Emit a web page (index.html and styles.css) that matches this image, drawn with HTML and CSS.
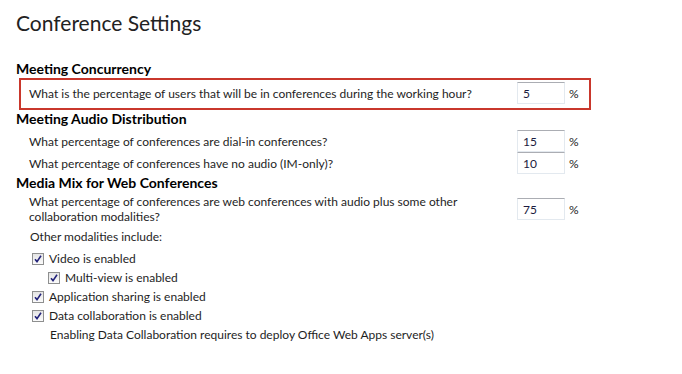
FILE: index.html
```html
<!DOCTYPE html>
<html lang="en">
<head>
    <meta charset="UTF-8">
    <title>Conference Settings</title>
    <link rel="stylesheet" href="styles.css">
</head>
<body>
    <div id="page">
        <h1>Conference Settings</h1>

        <h2>Meeting Concurrency</h2>
        <div class="highlight">
            <div class="row">
                <span class="question">What is the percentage of users that will be in conferences during the working hour?</span>
                <input type="text" value="5">
                <span class="unit">%</span>
            </div>
        </div>

        <h2>Meeting Audio Distribution</h2>
        <div class="rows">
            <div class="row">
                <span class="question">What percentage of conferences are dial-in conferences?</span>
                <input type="text" value="15">
                <span class="unit">%</span>
            </div>
            <div class="row">
                <span class="question">What percentage of conferences have no audio (IM-only)?</span>
                <input type="text" value="10">
                <span class="unit">%</span>
            </div>
        </div>

        <h2>Media Mix for Web Conferences</h2>
        <div class="rows">
            <div class="row tall">
                <span class="question">What percentage of conferences are web conferences with audio plus some other collaboration modalities?</span>
                <input type="text" value="75">
                <span class="unit">%</span>
            </div>
        </div>

        <p class="note">Other modalities include:</p>
        <div class="checks">
            <label class="check"><span class="box"><svg width="8" height="8" viewBox="0 0 8 8"><path d="M1 4.2 L3 6.6 L7 0.8" fill="none" stroke="#23237a" stroke-width="1.6"/></svg></span>Video is enabled</label>
            <label class="check sub"><span class="box"><svg width="8" height="8" viewBox="0 0 8 8"><path d="M1 4.2 L3 6.6 L7 0.8" fill="none" stroke="#23237a" stroke-width="1.6"/></svg></span>Multi-view is enabled</label>
            <label class="check"><span class="box"><svg width="8" height="8" viewBox="0 0 8 8"><path d="M1 4.2 L3 6.6 L7 0.8" fill="none" stroke="#23237a" stroke-width="1.6"/></svg></span>Application sharing is enabled</label>
            <label class="check"><span class="box"><svg width="8" height="8" viewBox="0 0 8 8"><path d="M1 4.2 L3 6.6 L7 0.8" fill="none" stroke="#23237a" stroke-width="1.6"/></svg></span>Data collaboration is enabled</label>
            <p class="hint">Enabling Data Collaboration requires to deploy Office Web Apps server(s)</p>
        </div>
    </div>
</body>
</html>
```

FILE: styles.css
```css
body {
    font-family: Lato, "Liberation Sans", sans-serif;
    font-size: 12px;
    color: #1e1e1e;
    background-color: #fff;
    margin: 0;
    padding: 0;
}
#page {
    width: 682px;
    padding: 8px 0 0 16px;
    box-sizing: border-box;
}
h1 {
    font-size: 21px;
    font-weight: 400;
    color: #222;
    margin: 0 0 22px 0;
    line-height: 30px;
}
h2 {
    font-size: 14px;
    font-weight: 700;
    color: #000;
    margin: 0;
    line-height: 18px;
}
.highlight {
    margin-left: 3px;
    width: 572px;
    height: 32px;
    box-sizing: border-box;
    border: 2px solid #c9372c;
    padding: 2px 0 0 8px;
}
.rows {
    padding-left: 13px;
    padding-top: 2px;
}
.row {
    display: grid;
    grid-template-columns: 488px 48px auto;
    align-items: center;
    height: 22px;
}
.row.tall {
    height: 30px;
    line-height: 15px;
}
.question {
    padding-right: 40px;
}
.unit {
    padding-left: 4px;
}
input {
    width: 48px;
    height: 22px;
    box-sizing: border-box;
    margin: 0;
    padding: 0 0 0 5px;
    border: 1px solid #e3e9ef;
    border-top-color: #abadb3;
    font-family: inherit;
    font-size: 12px;
    color: #1b1b40;
}
.note {
    margin: 4px 0 0 14px;
    line-height: 18px;
}
.checks {
    padding-left: 16px;
    padding-top: 3px;
}
.check {
    display: flex;
    align-items: center;
    gap: 5px;
    height: 19px;
}
.check.sub {
    padding-left: 16px;
}
.box {
    width: 12px;
    height: 12px;
    box-sizing: border-box;
    border: 1px solid #8e8f8f;
    background: linear-gradient(#e4e4e4, #fbfbfb);
    display: flex;
    align-items: center;
    justify-content: center;
}
.hint {
    margin: 0 0 0 18px;
    line-height: 19px;
}
```
